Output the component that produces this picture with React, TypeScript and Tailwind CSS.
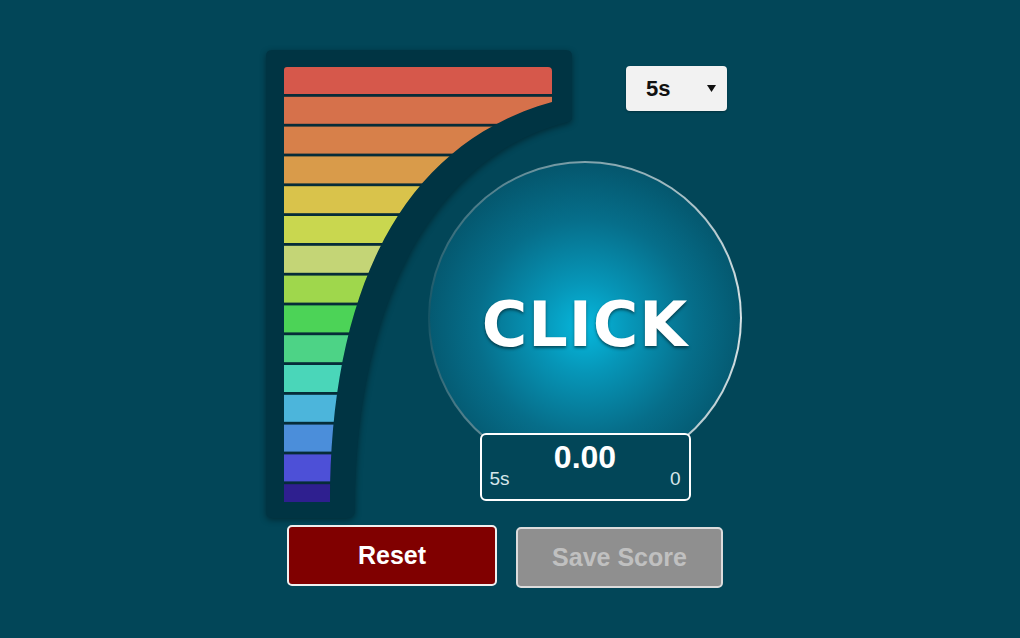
import React from "react";

const BAR_COLORS = [
  "#d6584b",
  "#d6714b",
  "#d7804a",
  "#d99b4a",
  "#d9c34b",
  "#c9d74f",
  "#c4d576",
  "#9fd74c",
  "#4cd357",
  "#4dd386",
  "#4ad6b9",
  "#4cb5db",
  "#4b8eda",
  "#4d50d7",
  "#2e1f8f",
];

const INNER = "M18,20 Q18,17 21,17 H282 Q286,17 286,21 V52 C130,95 64,250 64,452 H18 Z";
const OUTER =
  "M0,6 Q0,0 6,0 H300 Q306,0 306,6 V68 Q306,71 302,72 C170,105 89,250 89,460 Q89,468 81,468 H6 Q0,468 0,462 Z";

function Gauge() {
  return (
    <svg
      width="306"
      height="468"
      viewBox="0 0 306 468"
      className="overflow-visible [grid-area:1/1] justify-self-start drop-shadow-[0_2px_3px_rgba(0,0,0,0.4)]"
    >
      <defs>
        <clipPath id="barsClip">
          <path d={INNER} />
        </clipPath>
      </defs>
      <path d={OUTER} fill="#003443" />
      <g clipPath="url(#barsClip)">
        <rect x="0" y="0" width="306" height="468" fill="#062c38" />
        {BAR_COLORS.map((c, i) => (
          <rect key={i} x={18} y={17 + i * 29.8} width={268} height={27} fill={c} />
        ))}
      </g>
    </svg>
  );
}

export default function App() {
  return (
    <div className="w-full h-[638px] bg-[#024658] flex justify-center pt-[50px] font-['Liberation_Sans',Arial,sans-serif]">
      <div className="w-[488px] pr-[12px]">
        <div className="grid">
          <Gauge />
          <div className="[grid-area:1/1] flex flex-col items-end">
            <div className="mt-[16px] mr-[15px] w-[101px] h-[45px] rounded-[4px] bg-[#f2f2f2] shadow-[0_1px_2px_rgba(0,0,0,0.3)] flex items-center justify-between pl-[20px] pr-[11px]">
              <span className="text-[22px] font-bold text-[#111] leading-none">5s</span>
              <svg width="9" height="7" viewBox="0 0 9 7">
                <polygon points="0,0 9,0 4.5,7" fill="#111" />
              </svg>
            </div>
            <div className="mt-[50px] w-[314px] flex flex-col items-center">
              <div className="w-[314px] h-[314px] rounded-full border-2 border-transparent flex items-center justify-center [background:radial-gradient(circle_at_50%_53%,#06b8dd_0%,#0696b8_20%,#066e8a_48%,#045369_76%,#034a5e_100%)_padding-box,conic-gradient(rgba(255,255,255,0.5),rgba(255,255,255,0.85)_25%,rgba(255,255,255,0.6)_50%,rgba(255,255,255,0.08)_75%,rgba(255,255,255,0.5))_border-box]">
                <span className="text-white font-bold text-[62px] tracking-[1px] leading-none font-['DejaVu_Sans',Verdana,sans-serif] [text-shadow:0_2px_3px_rgba(0,0,0,0.5)] mt-[14px]">
                  CLICK
                </span>
              </div>
              <div className="relative -mt-[42px] w-[211px] h-[68px] rounded-[6px] border-2 border-white bg-[#024658] flex flex-col">
                <div className="mt-[6px] text-center text-white font-bold text-[32px] leading-[32px]">0.00</div>
                <div className="-mt-[3px] flex justify-between px-[8px] text-[#d6e6ea] text-[19px] leading-[18px]">
                  <span>5s</span>
                  <span>0</span>
                </div>
              </div>
            </div>
          </div>
        </div>
        <div className="mt-[7px] flex items-start gap-[19px] pl-[21px]">
          <button className="w-[210px] h-[61px] rounded-[5px] border-2 border-[#f0f0f0] bg-[#800000] text-white font-bold text-[25px]">
            Reset
          </button>
          <button className="mt-[2px] w-[207px] h-[61px] rounded-[5px] border-2 border-[#dcdcdc] bg-[#8f8f8f] text-[#c0c0c0] font-bold text-[25px]">
            Save Score
          </button>
        </div>
      </div>
    </div>
  );
}
